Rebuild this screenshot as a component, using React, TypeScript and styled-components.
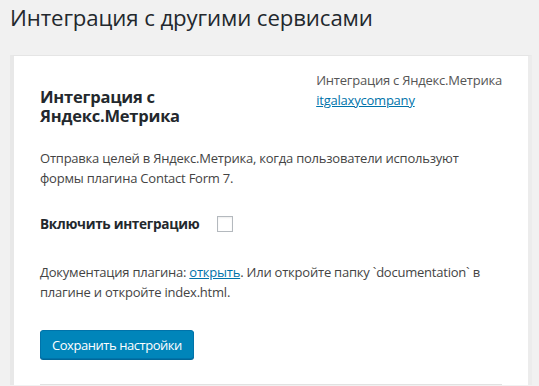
import { createGlobalStyle, styled } from 'styled-components'

const GlobalStyle = createGlobalStyle`
  html, body {
    margin: 0;
    padding: 0;
    background: #f1f1f1;
  }
  body {
    font-family: "Open Sans", "Noto Sans", sans-serif;
    color: #444;
    font-size: 13px;
    letter-spacing: -0.22px;
  }
`

const Page = styled.div`
  padding: 0 7px 0 10px;
  height: 386px;
  overflow: hidden;
`

const PageTitle = styled.h1`
  margin: 0;
  padding: 3px 0 0;
  font-size: 22.2px;
  font-weight: 400;
  line-height: 29px;
  letter-spacing: -0.1px;
  color: #23282d;
`

const Card = styled.div`
  margin-top: 23px;
  background: #fff;
  border-top: 1px solid #e5e5e5;
  border-left: 4px solid #e8e8e8;
  border-right: 4px solid #ececec;
  padding: 10px 26px 0;
`

const Header = styled.div`
  display: flex;
  justify-content: space-between;
  align-items: flex-start;
`

const CardTitle = styled.h2`
  margin: 22px 0 0;
  width: 200px;
  font-size: 16.5px;
  line-height: 18.5px;
  font-weight: 700;
  color: #23282d;
`

const Meta = styled.div`
  white-space: nowrap;
  padding-top: 4px;
  color: #555;
  line-height: 20px;
`

const Link = styled.a`
  color: #0073aa;
  text-decoration: underline;
`

const Text = styled.p<{ $top: number }>`
  margin: ${({ $top }) => $top}px 0 0;
  line-height: 19.5px;
  color: #444;
`

const OptionRow = styled.div`
  display: flex;
  align-items: center;
  gap: 18px;
  margin-top: 26px;
`

const OptionLabel = styled.span`
  font-size: 13.6px;
  font-weight: 700;
  letter-spacing: -0.3px;
  color: #23282d;
`

const Checkbox = styled.span`
  display: inline-block;
  width: 14px;
  height: 14px;
  border: 1px solid #b4b9be;
  background: #fff;
  box-shadow: inset 0 1px 2px rgba(0, 0, 0, 0.07);
`

const SaveButton = styled.button`
  display: block;
  margin-top: 28px;
  height: 29px;
  padding: 0 11px;
  background: #0085ba;
  border: 1px solid #0073aa;
  border-radius: 3px;
  box-shadow: 0 1px 0 #006799;
  color: #fff;
  font-family: inherit;
  font-size: 13px;
  letter-spacing: -0.45px;
  line-height: 26px;
  cursor: pointer;
`

const Divider = styled.hr`
  margin: 25px 0 0;
  border: 0;
  border-top: 1px solid #e1e1e1;
`

export default function App() {
  return (
    <Page>
      <GlobalStyle />
      <PageTitle>Интеграция с другими сервисами</PageTitle>
      <Card>
        <Header>
          <CardTitle>Интеграция с Яндекс.Метрика</CardTitle>
          <Meta>
            Интеграция с Яндекс.Метрика
            <br />
            <Link href="#">itgalaxycompany</Link>
          </Meta>
        </Header>
        <Text $top={24}>
          Отправка целей в Яндекс.Метрика, когда пользователи используют формы плагина Contact Form 7.
        </Text>
        <OptionRow>
          <OptionLabel>Включить интеграцию</OptionLabel>
          <Checkbox />
        </OptionRow>
        <Text $top={30}>
          Документация плагина: <Link href="#">открыть</Link>. Или откройте папку `documentation` в
          плагине и откройте index.html.
        </Text>
        <SaveButton>Сохранить настройки</SaveButton>
        <Divider />
      </Card>
    </Page>
  )
}
